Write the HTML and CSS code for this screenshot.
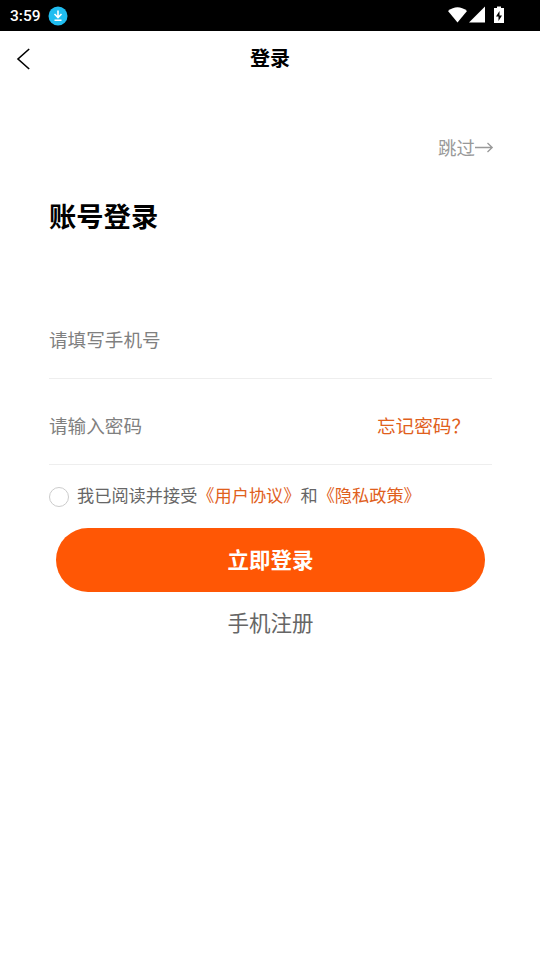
FILE: index.html
```html
<!DOCTYPE html>
<html lang="zh-CN">
<head>
<meta charset="utf-8">
<title>登录</title>
<link rel="stylesheet" href="styles.css">
</head>
<body>
<div class="status">
  <span class="time">3:59</span>
  <svg class="download" viewBox="0 0 20 20"><circle cx="10" cy="10" r="9.5" fill="#20bdf0"/><path d="M10 4.500v7M6.500 8l3.500 3.500L13.500 8M6.500 14.200h7" fill="none" stroke="#fff" stroke-width="1.6"/></svg>
  <svg class="signals" viewBox="0 0 60 20"><path d="M0 5Q9.500-2.500 19 5L9.500 16.500Z" fill="#fff"/><path d="M37 .5v16H21Z" fill="#fff"/><path d="M46 2h3V.5h4V2h3v15H46Z" fill="#fff"/><path d="M51.500 5l-3.500 5.500h2.500V15l3.500-5.500h-2.500Z" fill="#000"/></svg>
</div>
<header class="navbar">
  <svg class="back" viewBox="0 0 14 22"><path d="M13.200 1L2 11l11.200 10" fill="none" stroke="#000" stroke-width="1.600"/></svg>
  <h1 class="title">登录</h1>
</header>
<main class="login">
  <a class="skip">跳过<svg class="arrow" viewBox="0 0 19 12"><path d="M0 6.500h17M12.500 2L17.200 6.500 12.500 11" fill="none" stroke="#999" stroke-width="1.300"/></svg></a>
  <h2 class="heading">账号登录</h2>
  <div class="field phone"><span>请填写手机号</span></div>
  <div class="field password"><span>请输入密码</span><a class="forgot">忘记密码？</a></div>
  <div class="agreement"><i class="radio"></i><span class="terms">我已阅读并接受<a>《用户协议》</a>和<a>《隐私政策》</a></span></div>
  <button class="submit">立即登录</button>
  <a class="register">手机注册</a>
</main>
</body>
</html>
```
FILE: styles.css
```css
* { box-sizing: border-box; }
body { margin: 0; background: #fff; color: #000; font-family: "Noto Sans CJK SC", sans-serif; }
.status { height: 31px; background: #000; color: #fff; display: flex; align-items: center; padding: 0 32px 0 10px; }
.time { font: 500 15.500px Roboto, sans-serif; width: 38px; }
.download { width: 20px; height: 20px; }
.signals { width: 60px; height: 20px; margin-left: auto; }
.navbar { height: 56px; display: grid; grid-template-columns: 50px 1fr 50px; align-items: center; }
.back { width: 14px; height: 22px; margin: 0 0 0 16px; }
.title { margin: 0 0 2px; font-size: 20px; line-height: 30px; font-weight: 700; text-align: center; }
.login { padding: 46px 48px 0 49px; display: flex; flex-direction: column; }
.skip { align-self: flex-end; display: flex; align-items: center; margin-right: -2px; font-size: 18.500px; line-height: 28px; color: #999; }
.arrow { width: 19px; height: 12px; }
.heading { margin: 34px 0 0; font-size: 27.300px; line-height: 40px; font-weight: 700; }
.field { display: flex; justify-content: space-between; align-items: center; border-bottom: 1px solid #eee; font-size: 18.600px; line-height: 28px; color: #808080; }
.phone { margin-top: 67px; height: 77px; padding-bottom: 2px; }
.password { height: 86px; padding-top: 6px; }
.forgot { color: #e0601c; margin-right: 22px; }
.agreement { display: flex; align-items: center; height: 63px; font-size: 17.200px; color: #666; white-space: nowrap; }
.terms { margin-bottom: 4px; }
.agreement a { color: #e0601c; }
.radio { width: 20px; height: 20px; border: 1px solid #ccc; border-radius: 50%; margin-right: 8px; }
.submit { width: 429px; height: 64px; margin-left: 7px; padding: 0 0 2px; border: 0; border-radius: 32px; background: #ff5705; color: #fff; font: 700 21.500px/62px "Noto Sans CJK SC", sans-serif; }
.register { align-self: center; margin-top: 14px; font-size: 21.500px; line-height: 32px; color: #666; }
```
